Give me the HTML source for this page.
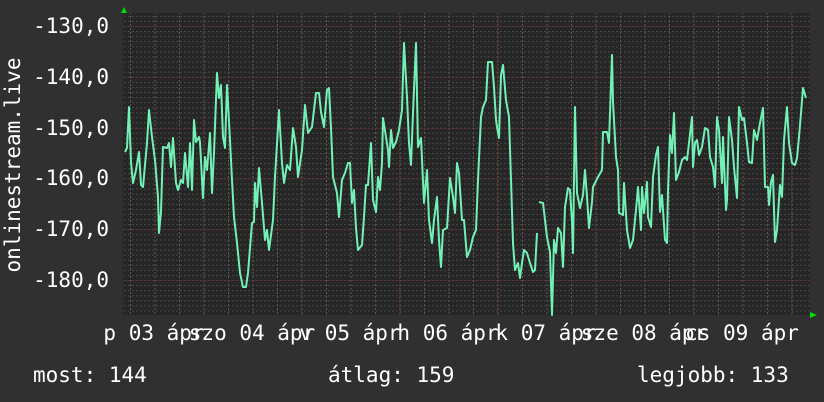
<!DOCTYPE html>
<html><head><meta charset="utf-8"><style>
html,body{margin:0;padding:0;background:#303030;width:824px;height:402px;overflow:hidden}
svg{display:block}
text{font-family:"DejaVu Sans Mono","Liberation Mono",monospace;font-size:21px;fill:#fff}
</style></head><body>
<svg width="824" height="402" viewBox="0 0 824 402" xmlns="http://www.w3.org/2000/svg">
<defs>
<pattern id="hg" patternUnits="userSpaceOnUse" x="0" y="26" width="4" height="5.08">
<rect x="0" y="0" width="2" height="1" fill="#464646"/>
</pattern>
<pattern id="vg" patternUnits="userSpaceOnUse" x="130" y="0" width="24.5" height="4">
<rect x="0" y="0" width="1" height="2" fill="#5a5a5a"/>
</pattern>
</defs>
<rect x="0" y="0" width="824" height="402" fill="#303030"/>
<rect x="123" y="13" width="687" height="302" fill="#262626"/>
<rect x="123" y="13" width="687" height="302" fill="url(#hg)"/>
<rect x="123" y="13" width="687" height="302" fill="url(#vg)"/>
<g stroke="#633030" stroke-width="1" stroke-dasharray="2,2">
<line x1="123" y1="26.5" x2="810" y2="26.5"/>
<line x1="123" y1="77.5" x2="810" y2="77.5"/>
<line x1="123" y1="128.5" x2="810" y2="128.5"/>
<line x1="123" y1="178.5" x2="810" y2="178.5"/>
<line x1="123" y1="229.5" x2="810" y2="229.5"/>
<line x1="123" y1="280.5" x2="810" y2="280.5"/>
<line x1="203.5" y1="13" x2="203.5" y2="315"/>
<line x1="301.5" y1="13" x2="301.5" y2="315"/>
<line x1="399.5" y1="13" x2="399.5" y2="315"/>
<line x1="497.5" y1="13" x2="497.5" y2="315"/>
<line x1="595.5" y1="13" x2="595.5" y2="315"/>
<line x1="693.5" y1="13" x2="693.5" y2="315"/>
<line x1="791.5" y1="13" x2="791.5" y2="315"/>
</g>
<g fill="none" stroke="#72f0b6" stroke-width="2" stroke-linejoin="round">
<polyline points="125,152 127,148 129,107 131,162 133,183 136,170 139,152 141,185 143,187 147,143 149,110 152,137 155,160 158,197 159,233 161,212 163,147 167,148 169,143 171,167 173,138 176,183 178,190 181,180 183,183 185,153 188,187 190,143 192,190 194,120 196,142 199,137 200,142 203,198 205,157 207,170 210,133 212,193 214,153 217,73 219,98 221,85 223,137 225,148 227,85 230,140 232,180 234,217 237,243 240,273 243,287 246,287 248,273 252,223 254,222 255,183 257,207 259,168 262,203 265,240 267,230 269,250 273,220 275,177 279,110 282,163 284,183 287,165 290,170 293,128 296,147 298,177 302,150 305,105 308,133 312,127 316,93 319,93 321,112 324,127 327,90 329,88 331,128 333,177 337,193 339,217 342,180 345,173 348,163 350,163 352,203 354,190 356,228 358,250 362,245 364,217 366,185 368,185 371,143 373,200 376,212 378,177 380,190 382,163 383,118 386,137 388,150 389,167 391,130 393,148 396,142 399,130 402,110 404,43 407,97 409,143 411,165 413,113 416,43 418,147 421,138 424,203 427,170 429,220 432,243 434,220 437,197 439,240 441,267 443,230 447,228 450,178 453,197 455,213 457,163 459,173 462,220 464,220 467,257 470,250 473,237 476,230 478,180 481,117 483,107 486,100 488,62 492,62 494,87 496,120 497,127 499,138 501,75 503,65 506,100 509,117 511,180 513,243 515,270 518,263 520,278 522,263 524,250 527,253 530,263 533,272 535,270 537,233"/>
<polyline points="539,202 543,203 547,237 550,252 552,315 554,240 556,253 558,228 561,233 563,267 565,207 568,188 570,190 572,222 573,253 575,107 577,193 580,208 583,195 585,170 587,197 589,228 592,202 593,187 598,177 602,170 603,132 607,132 609,143 612,55 613,102 616,157 618,170 619,213 623,215 624,183 627,230 630,248 633,240 636,210 638,187 641,230 642,187 644,213 647,182 648,217 651,227 653,177 656,155 658,147 660,212 662,195 665,240 667,243 668,190 670,135 672,153 674,113 676,180 679,172 682,160 685,157 687,160 689,143 692,117 693,167 695,143 697,140 699,155 702,147 705,128 708,130 710,157 713,167 715,187 717,117 719,130 722,183 723,137 726,210 727,200 729,117 732,140 734,167 737,198 739,107 742,120 744,118 747,143 749,162 752,163 754,130 757,140 760,123 763,108 765,187 768,187 769,205 771,182 773,175 775,242 777,230 780,185 782,197 784,140 787,107 789,143 792,163 795,165 797,158 799,137 801,113 803,88 806,98"/>
</g>
<polygon points="121,13 127,13 124,7" fill="#00e000"/>
<polygon points="810,312 810,318 817,315" fill="#00e000"/>
<g text-anchor="end">
<text x="109" y="33">-130,0</text>
<text x="109" y="84">-140,0</text>
<text x="109" y="135">-150,0</text>
<text x="109" y="185">-160,0</text>
<text x="109" y="236">-170,0</text>
<text x="109" y="287">-180,0</text>
</g>
<text transform="translate(20,165) rotate(-90)" text-anchor="middle">onlinestream.live</text>
<g text-anchor="middle">
<text x="154" y="340">p 03 ápr</text>
<text x="252" y="340">szo 04 ápr</text>
<text x="350" y="340">v 05 ápr</text>
<text x="448" y="340">h 06 ápr</text>
<text x="546" y="340">k 07 ápr</text>
<text x="644" y="340">sze 08 ápr</text>
<text x="742" y="340">cs 09 ápr</text>
</g>
<text x="33" y="382">most: 144</text>
<text x="328" y="382">átlag: 159</text>
<text x="637" y="382">legjobb: 133</text>
</svg>
</body></html>
